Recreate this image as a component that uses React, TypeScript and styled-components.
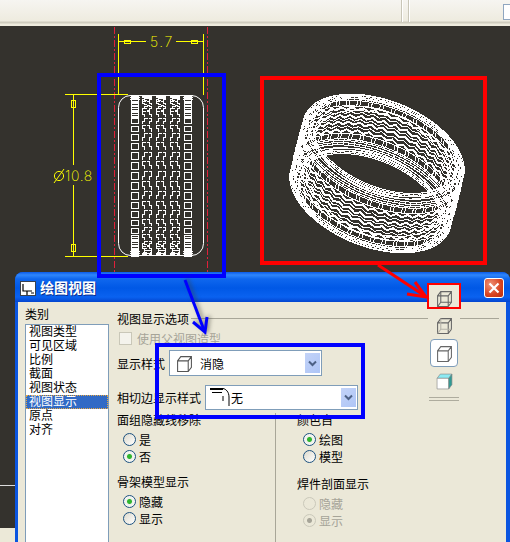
import React from "react";
import styled, { createGlobalStyle } from "styled-components";

const UI_FONT = `"Liberation Sans", "Noto Sans CJK SC", sans-serif`;

const GlobalStyle = createGlobalStyle`
  html, body {
    margin: 0;
    padding: 0;
    overflow: hidden;
    background: #ece9d8;
  }
`;

/* ---------- geometry for the two tyre drawings ---------- */

const range = (n: number) => Array.from({ length: n }, (_, i) => i);

const flatTyrePath = () => {
  const cy = 175.5;
  const R = 80;
  const N = 12;
  const step = Math.PI / (2 * N + 1);
  const y = (i: number) => Math.round(cy + R * Math.sin(i * step)) + 0.5;
  let d = "";
  const ids = range(2 * N + 1).map((i) => i - N);

  // block shoulders
  [131, 184].forEach((x) => {
    ids.forEach((i) => {
      d += `M${x + 0.5} ${y(i - 0.36)}H${x + 7.5}V${y(i + 0.36)}H${x + 0.5}Z`;
      if (Math.abs(i) > 6) d += `M${x} ${y(i)}h8M${x} ${y(i + 0.5)}h8`;
    });
    d += `M${x - 1} 95.5h10M${x - 1} 97.5h10M${x - 1} 99.5h10M${x - 1} 255.5h10M${x - 1} 253.5h10M${x - 1} 251.5h10`;
  });

  // zig-zag ribs, broken into short brackets
  [142, 156, 170].forEach((x) => {
    [x + 0.5, x + 7.5].forEach((edge, side) => {
      ids.forEach((i) => {
        const off = i % 2 === 0 ? 2 : 0;
        const a = edge + off;
        const b = edge + 2 - off;
        const tick = side === 0 ? 3 : -3;
        d += `M${a + tick} ${y(i - 0.42)}H${a}V${y(i)}H${b}V${y(i + 0.3)}`;
        if (Math.abs(i) > 7) d += `M${x + 2} ${y(i + 0.1)}h3M${x + 5} ${y(i + 0.45)}h3`;
      });
    });
    d += `M${x} 95.5h10M${x} 97.5h10M${x} 255.5h10M${x} 253.5h10`;
  });
  return d;
};

const PHI = (22 * Math.PI) / 180;
const LOW = { x: 370, y: 201 };
const HIGH = { x: 384, y: 146 };
const COUNT = 44;

const tyrePoint = (t: number, r: number, theta: number) => {
  const a = 85 * r * Math.cos(theta);
  const b = 47 * r * Math.sin(theta);
  return [
    LOW.x + (HIGH.x - LOW.x) * t + a * Math.cos(PHI) - b * Math.sin(PHI),
    LOW.y + (HIGH.y - LOW.y) * t + a * Math.sin(PHI) + b * Math.cos(PHI),
  ];
};

const ringPath = (fn: (theta: number) => [number, number]) => {
  const steps = 440;
  return (
    range(steps + 1)
      .map((i) => {
        const theta = (i / steps) * Math.PI * 2;
        const [t, r] = fn(theta);
        const [x, y] = tyrePoint(t, r, theta);
        return `${i === 0 ? "M" : "L"}${x.toFixed(1)} ${y.toFixed(1)}`;
      })
      .join("") + "Z"
  );
};

const crossTick = (t0: number, t1: number, r: number, theta: number) => {
  const [x0, y0] = tyrePoint(t0, r, theta);
  const [x1, y1] = tyrePoint(t1, r, theta);
  return `M${x0.toFixed(1)} ${y0.toFixed(1)}L${x1.toFixed(1)} ${y1.toFixed(1)}`;
};

const radialTick = (t: number, r0: number, r1: number, theta: number) => {
  const [x0, y0] = tyrePoint(t, r0, theta);
  const [x1, y1] = tyrePoint(t, r1, theta);
  return `M${x0.toFixed(1)} ${y0.toFixed(1)}L${x1.toFixed(1)} ${y1.toFixed(1)}`;
};

const wave = (t: number, amp: number) =>
  ringPath((theta) => {
    const phase = (theta * COUNT) / (Math.PI * 2);
    const saw = Math.abs((phase % 1) - 0.5) * 2 - 0.5;
    return [t + saw * amp, 1];
  });

const wireTyreThin = () => {
  let d = "";
  const pitch = (Math.PI * 2) / COUNT;

  // shoulders and sidewalls
  [
    [0, 0.88],
    [0, 0.91],
    [0, 0.94],
    [0.015, 0.97],
    [0.04, 1],
    [0.08, 1],
    [0.12, 1],
    [0.88, 1],
    [0.92, 1],
    [0.96, 1],
    [0.985, 0.97],
    [1, 0.94],
    [1, 0.91],
    [1, 0.88],
  ].forEach(([t, r]) => {
    d += ringPath(() => [t, r]);
  });

  range(COUNT * 2).forEach((i) => {
    const th = (i / 2) * pitch;
    d += crossTick(0.03, 0.09, 1, th);
    d += crossTick(0.91, 0.97, 1, th);
    d += crossTick(0.1 + (i % 2) * 0.02, 0.14, 1, th);
    d += crossTick(0.86, 0.9 - (i % 2) * 0.02, 1, th);
    d += radialTick(0, 0.88, 0.95, th);
    d += radialTick(1, 0.88, 0.95, th);
  });

  // block bands
  [
    [0.15, 0.25],
    [0.75, 0.85],
  ].forEach(([t0, t1]) => {
    d += ringPath(() => [t0, 1]);
    d += ringPath(() => [t1, 1]);
    range(COUNT).forEach((i) => {
      const th = i * pitch;
      d += crossTick(t0, t1, 1, th - 0.36 * pitch);
      d += crossTick(t0, t1, 1, th + 0.36 * pitch);
    });
  });

  // the narrow lines of the ribs
  [0.37, 0.5, 0.63].forEach((t) => {
    d += wave(t, 0.04);
  });

  // rim seen through the opening
  [
    [0.1, 0.84],
    [0.16, 0.82],
    [0.84, 0.82],
    [0.9, 0.84],
  ].forEach(([t, r]) => {
    d += ringPath(() => [t, r]);
  });
  return d;
};

const wireTyreThick = () =>
  [0.3, 0.44, 0.56, 0.7].map((t) => wave(t, 0.05)).join("");

/* ---------- page shell ---------- */

const Desktop = styled.div`
  position: relative;
  width: 510px;
  height: 542px;
  overflow: hidden;
  display: flex;
  flex-direction: column;
  font-family: ${UI_FONT};
  font-size: 12px;
  color: #000;
`;

const Toolbar = styled.div`
  height: 26px;
  flex: none;
  box-sizing: border-box;
  padding: 4px 0 6px 401px;
  display: flex;
  background: linear-gradient(
    #f6f5f1 0,
    #eeebdf 21px,
    #cfccbe 22px,
    #cfccbe 23px,
    #eeebdd 24px,
    #eeebdd 26px
  );
`;

const ToolSep = styled.div`
  width: 1px;
  margin-right: 5px;
  margin-top: -4px;
  margin-bottom: -2px;
  background: #c9c6b8;
  border-right: 1px solid #fff;
`;

const ToolField = styled.div`
  width: 6px;
  margin-left: auto;
  background: #fff;
  border: 1px solid #8fa6c0;
  border-right: 0;
`;

const Viewport = styled.div`
  flex: 1;
  background: #34322d;
  min-height: 0;
`;

const CadSvg = styled.svg`
  display: block;
  width: 510px;
  height: 502px;
`;

const StatusBar = styled.div`
  height: 14px;
  flex: none;
  background: #ece9d8;
`;

/* ---------- dialog ---------- */

const Dialog = styled.div`
  position: absolute;
  left: 15px;
  top: 272px;
  width: 495px;
  height: 270px;
  display: flex;
  flex-direction: column;
  border-radius: 8px 8px 0 0;
  background: #0a55e0;
`;

const TitleBar = styled.div`
  height: 30px;
  flex: none;
  display: flex;
  align-items: center;
  padding: 2px 6px 0 5px;
  box-sizing: border-box;
  border-radius: 8px 8px 0 0;
  background: linear-gradient(
    #0a5ae8 0,
    #2f86fb 3px,
    #0f67ee 7px,
    #0058e6 16px,
    #0a62f0 25px,
    #0345cf 30px
  );
`;

const TitleIcon = styled.svg`
  width: 16px;
  height: 15px;
  flex: none;
`;

const TitleText = styled.div`
  margin-left: 4px;
  color: #fff;
  font-size: 14px;
  font-weight: 700;
  line-height: 16px;
  text-shadow: 1px 1px 0 #0a2f90;
`;

const CloseButton = styled.div`
  margin-left: auto;
  width: 20px;
  height: 20px;
  box-sizing: border-box;
  border: 1px solid #fff;
  border-radius: 3px;
  background: radial-gradient(circle at 30% 30%, #ef9378, #d8431f 60%, #b92f10);
  display: flex;
  align-items: center;
  justify-content: center;
`;

const DialogBody = styled.div`
  flex: 1;
  min-height: 0;
  margin: 0 4px 0 3px;
  background: #ebe8d8;
  display: flex;
  overflow: hidden;
`;

const Sidebar = styled.div`
  width: 84px;
  margin-left: 7px;
  flex: none;
  padding-top: 6px;
`;

const Caption = styled.div`
  line-height: 14px;
  height: 14px;
  white-space: nowrap;
`;

const CategoryList = styled.ul`
  list-style: none;
  margin: 2px 0 0;
  padding: 0;
  height: 240px;
  box-sizing: border-box;
  border: 1px solid #7f9db9;
  background: #fff;
`;

const CategoryItem = styled.li<{ $active?: boolean }>`
  height: 14px;
  line-height: 14px;
  padding-left: 3px;
  white-space: nowrap;
  color: ${(p) => (p.$active ? "#fff" : "#000")};
  background: ${(p) => (p.$active ? "#316ac5" : "transparent")};
  outline: ${(p) => (p.$active ? "1px dotted #e8a840" : "none")};
  outline-offset: -1px;
`;

const Main = styled.div`
  flex: 1;
  margin-left: 8px;
  margin-right: 7px;
  padding-top: 9px;
  min-width: 0;
`;

const LegendRow = styled.div`
  display: flex;
  align-items: center;
  gap: 2px;
  height: 14px;
`;

const LegendLine = styled.div`
  flex: 1;
  height: 1px;
  background: #a8a698;
`;

const CheckRow = styled.div`
  display: flex;
  align-items: center;
  height: 14px;
  margin: 6px 0 0 2px;
  color: #a6a498;
`;

const CheckBox = styled.div`
  width: 11px;
  height: 11px;
  margin-right: 5px;
  border: 1px solid #c9c7b8;
  background: #f4f3ec;
`;

const FieldRow = styled.div<{ $top: number }>`
  display: flex;
  align-items: center;
  margin-top: ${(p) => p.$top}px;
`;

const FieldLabel = styled.div<{ $width: number }>`
  width: ${(p) => p.$width}px;
  white-space: nowrap;
  flex: none;
`;

const Combo = styled.div<{ $height: number; $pad: number }>`
  width: 153px;
  height: ${(p) => p.$height}px;
  box-sizing: border-box;
  border: 1px solid #7f9db9;
  background: #fff;
  display: flex;
  align-items: center;
  padding-left: ${(p) => p.$pad}px;
`;

const ComboText = styled.span<{ $left: number }>`
  margin-left: ${(p) => p.$left}px;
`;

const ComboButton = styled.div`
  margin-left: auto;
  margin-right: 1px;
  width: 15px;
  height: calc(100% - 4px);
  background: linear-gradient(135deg, #c3d3f8, #aec5f6);
  display: flex;
  align-items: center;
  justify-content: center;
`;

const Columns = styled.div`
  display: grid;
  grid-template-columns: 158px 1fr;
  margin-top: 3px;
  height: 130px;
`;

const LeftColumn = styled.div`
  padding-top: 1px;
`;

const RightColumn = styled.div`
  padding: 1px 0 0 21px;
  border-left: 1px solid #a8a698;
`;

const GroupTitle = styled.div<{ $top?: number }>`
  height: 14px;
  line-height: 14px;
  margin: ${(p) => p.$top ?? 0}px 0 3px;
  white-space: nowrap;
`;

const RadioRow = styled.div<{ $off?: boolean }>`
  display: flex;
  align-items: center;
  height: 17px;
  padding-left: 6px;
  color: ${(p) => (p.$off ? "#a6a498" : "#000")};
`;

const RadioDot = styled.div<{ $on?: boolean; $off?: boolean }>`
  width: 13px;
  height: 13px;
  box-sizing: border-box;
  margin-right: 3px;
  border-radius: 50%;
  border: 1px solid ${(p) => (p.$off ? "#cac8ba" : "#1c5180")};
  background: ${(p) => {
    if (p.$on && p.$off) return "radial-gradient(circle, #a6a498 0 2px, #ebe8d8 3px)";
    if (p.$on) return "radial-gradient(circle, #2fb52f 0 2px, #eef0ea 3px, #fff)";
    if (p.$off) return "#ebe8d8";
    return "linear-gradient(135deg, #dcd9cc, #fff)";
  }};
`;

/* ---------- view style strip on the right ---------- */

const ViewStrip = styled.div`
  position: absolute;
  left: 413px;
  top: 13px;
  width: 32px;
  display: flex;
  flex-direction: column;
  align-items: center;
  background: #ebe8d8;
  padding-top: 5px;
  height: 112px;
`;

const StripIcon = styled.svg<{ $top: number }>`
  display: block;
  flex: none;
  margin-top: ${(p) => p.$top}px;
`;

const StripButton = styled.div`
  width: 28px;
  height: 28px;
  flex: none;
  margin-top: 5px;
  box-sizing: border-box;
  border: 1px solid #7f9db9;
  border-radius: 4px;
  background: #fff;
  display: flex;
  align-items: center;
  justify-content: center;
`;

const StripRule = styled.div`
  width: 30px;
  height: 2px;
  flex: none;
  margin-top: 7px;
  border-top: 1px solid #aeac9e;
  border-bottom: 1px solid #aeac9e;
`;

/* ---------- annotations pasted over the screenshot ---------- */

const Callout = styled.div<{ $c: string; $b: number }>`
  position: absolute;
  box-sizing: border-box;
  border: ${(p) => p.$b}px solid ${(p) => p.$c};
`;

const ArrowLayer = styled.svg`
  position: absolute;
  left: 0;
  top: 0;
  width: 510px;
  height: 542px;
  pointer-events: none;
`;

/* ---------- small drawings ---------- */

const Cube = ({ kind, size, top }: { kind: "wire" | "fade" | "solid"; size: number; top?: number }) => (
  <StripIcon $top={top ?? 0} width={size} height={size} viewBox="0 0 16 16" fill="none" stroke="#666" strokeWidth="1">
    <path d="M1.5 5.5h10v10h-10zM1.5 5.5l3-4h10v10l-3 4M11.5 5.5l3-4" />
    {kind !== "solid" && (
      <path d="M4.5 1.5v10h10M4.5 11.5l-3 4" stroke={kind === "fade" ? "#b5b3a8" : "#666"} />
    )}
  </StripIcon>
);

const ShadedCube = () => (
  <StripIcon $top={6} width="17" height="17" viewBox="0 0 16 16" stroke="#888" strokeWidth="0.6">
    <path d="M1 5l3-4h11l-3 4z" fill="#8ceaf2" />
    <path d="M1 5h11v10H1z" fill="#fff" />
    <path d="M12 5l3-4v10l-3 4z" fill="#2f9a94" />
  </StripIcon>
);

const Chevron = () => (
  <svg width="9" height="7" viewBox="0 0 9 7" fill="none">
    <path d="M1 1.5l3.5 3.5L8 1.5" stroke="#4d6185" strokeWidth="2" />
  </svg>
);

const TangentIcon = () => (
  <svg width="20" height="20" viewBox="0 0 20 20" fill="none" stroke="#000" strokeWidth="1">
    <path d="M0 0.5H13C16 1 19 4 19 9V18M0 1.5H13" />
    <path d="M2 4.5H12" />
    <path d="M13 8V13" />
  </svg>
);

const Radio = ({ label, on, off }: { label: string; on?: boolean; off?: boolean }) => (
  <RadioRow $off={off}>
    <RadioDot $on={on} $off={off} />
    {label}
  </RadioRow>
);

const CATEGORIES = ["视图类型", "可见区域", "比例", "截面", "视图状态", "视图显示", "原点", "对齐"];

const YELLOW = "#ffff00";

const CadDrawing = () => (
  <CadSvg viewBox="0 26 510 502">
    {/* centre lines */}
    <g stroke="#e0203a" strokeDasharray="7 2 2 2" fill="none">
      <path d="M114.5 27V272M207.5 27V272" />
    </g>

    {/* dimensions */}
    <g stroke={YELLOW} fill="none" shapeRendering="crispEdges">
      <path d="M118.5 34V95M203.5 34V95" />
      <path d="M118 41.5H146M176 41.5H203" />
      <path d="M124.5 40v3h6v-3zM191.5 40v3h6v-3z" />
      <path d="M65 94.5H128M65 256.5H128" />
      <path d="M73.5 94V165M73.5 185V256" />
      <path d="M71.5 100h4v7h-4zM71.5 244h4v7h-4z" />
    </g>
    <g fill={YELLOW} fontFamily="Inter, Liberation Sans, sans-serif" fontWeight="200" fontSize="14">
      <text x="150" y="47" letterSpacing="1.5">5.7</text>
      <text x="65" y="181" letterSpacing="0.6">10.8</text>
    </g>
    <g stroke={YELLOW} fill="none">
      <circle cx="59" cy="176" r="4.6" />
      <path d="M54 183L64 169" />
    </g>

    {/* flat tyre */}
    <g stroke="#fff" fill="none" shapeRendering="crispEdges">
      <rect x="118.5" y="95.5" width="85" height="160" rx="12" shapeRendering="auto" />
      <path d={flatTyrePath()} />
    </g>

    {/* wireframe tyre */}
    <g stroke="#fff" fill="none" shapeRendering="crispEdges">
      <path d={wireTyreThin()} />
      <path d={wireTyreThick()} strokeWidth="2" />
    </g>

    {/* stray edge left of the dialog */}
    <path d="M0 485.5H15" stroke="#ddd" />
  </CadSvg>
);

export default function App() {
  return (
    <Desktop>
      <GlobalStyle />
      <Toolbar>
        <ToolSep />
        <ToolSep />
        <ToolField />
      </Toolbar>
      <Viewport>
        <CadDrawing />
      </Viewport>
      <StatusBar />

      <Dialog>
        <TitleBar>
          <TitleIcon viewBox="0 0 16 15">
            <rect x="0.5" y="0.5" width="15" height="14" fill="#fff" stroke="#39424f" />
            <path d="M3 3v7h9M7 10v4M11 12h3" stroke="#000" fill="none" strokeWidth="1.2" />
          </TitleIcon>
          <TitleText>绘图视图</TitleText>
          <CloseButton>
            <svg width="12" height="12" viewBox="0 0 12 12">
              <path d="M1.5 1.5l9 9M10.5 1.5l-9 9" stroke="#fff" strokeWidth="2.2" />
            </svg>
          </CloseButton>
        </TitleBar>
        <DialogBody>
          <Sidebar>
            <Caption>类别</Caption>
            <CategoryList>
              {CATEGORIES.map((c) => (
                <CategoryItem key={c} $active={c === "视图显示"}>
                  {c}
                </CategoryItem>
              ))}
            </CategoryList>
          </Sidebar>
          <Main>
            <LegendRow>
              <span>视图显示选项</span>
              <LegendLine />
            </LegendRow>
            <CheckRow>
              <CheckBox />
              使用父视图造型
            </CheckRow>
            <FieldRow $top={5}>
              <FieldLabel $width={52}>显示样式</FieldLabel>
              <Combo $height={26} $pad={6}>
                <svg width="17" height="17" viewBox="0 0 16 16" fill="none" stroke="#555">
                  <path d="M1.5 5.5h10v10h-10zM1.5 5.5l3-4h10v10l-3 4M11.5 5.5l3-4" />
                </svg>
                <ComboText $left={7}>消隐</ComboText>
                <ComboButton>
                  <Chevron />
                </ComboButton>
              </Combo>
            </FieldRow>
            <FieldRow $top={9}>
              <FieldLabel $width={88}>相切边显示样式</FieldLabel>
              <Combo $height={25} $pad={4}>
                <TangentIcon />
                <ComboText $left={1}>无</ComboText>
                <ComboButton>
                  <Chevron />
                </ComboButton>
              </Combo>
            </FieldRow>
            <Columns>
              <LeftColumn>
                <GroupTitle>面组隐藏线移除</GroupTitle>
                <Radio label="是" />
                <Radio label="否" on />
                <GroupTitle $top={11}>骨架模型显示</GroupTitle>
                <Radio label="隐藏" on />
                <Radio label="显示" />
              </LeftColumn>
              <RightColumn>
                <GroupTitle>颜色自</GroupTitle>
                <Radio label="绘图" on />
                <Radio label="模型" />
                <GroupTitle $top={13}>焊件剖面显示</GroupTitle>
                <Radio label="隐藏" off />
                <Radio label="显示" off on />
              </RightColumn>
            </Columns>
          </Main>
        </DialogBody>
        <ViewStrip>
          <Cube kind="wire" size={17} />
          <Cube kind="fade" size={17} top={10} />
          <StripButton>
            <Cube kind="solid" size={17} />
          </StripButton>
          <ShadedCube />
          <StripRule />
        </ViewStrip>
      </Dialog>

      <Callout $c="#0000ff" $b={4} style={{ left: 97, top: 73, width: 129, height: 205 }} />
      <Callout $c="#0000ff" $b={4} style={{ left: 155, top: 343, width: 210, height: 76 }} />
      <Callout $c="#ff0000" $b={4} style={{ left: 260, top: 76, width: 227, height: 189 }} />
      <Callout $c="#ff0000" $b={2} style={{ left: 427, top: 283, width: 34, height: 26 }} />

      <ArrowLayer viewBox="0 0 510 542" fill="none" strokeWidth="3">
        <g stroke="#ff0000">
          <path d="M378 265L425 296" />
          <path d="M407 294L426 297L415 282" />
        </g>
        <g stroke="#0000ff" style={{ filter: "drop-shadow(2px -1px 2px rgba(60,60,50,.55))" }}>
          <path d="M185 280L204 330" />
          <path d="M193 322L205 332L207 317" />
        </g>
      </ArrowLayer>
    </Desktop>
  );
}
